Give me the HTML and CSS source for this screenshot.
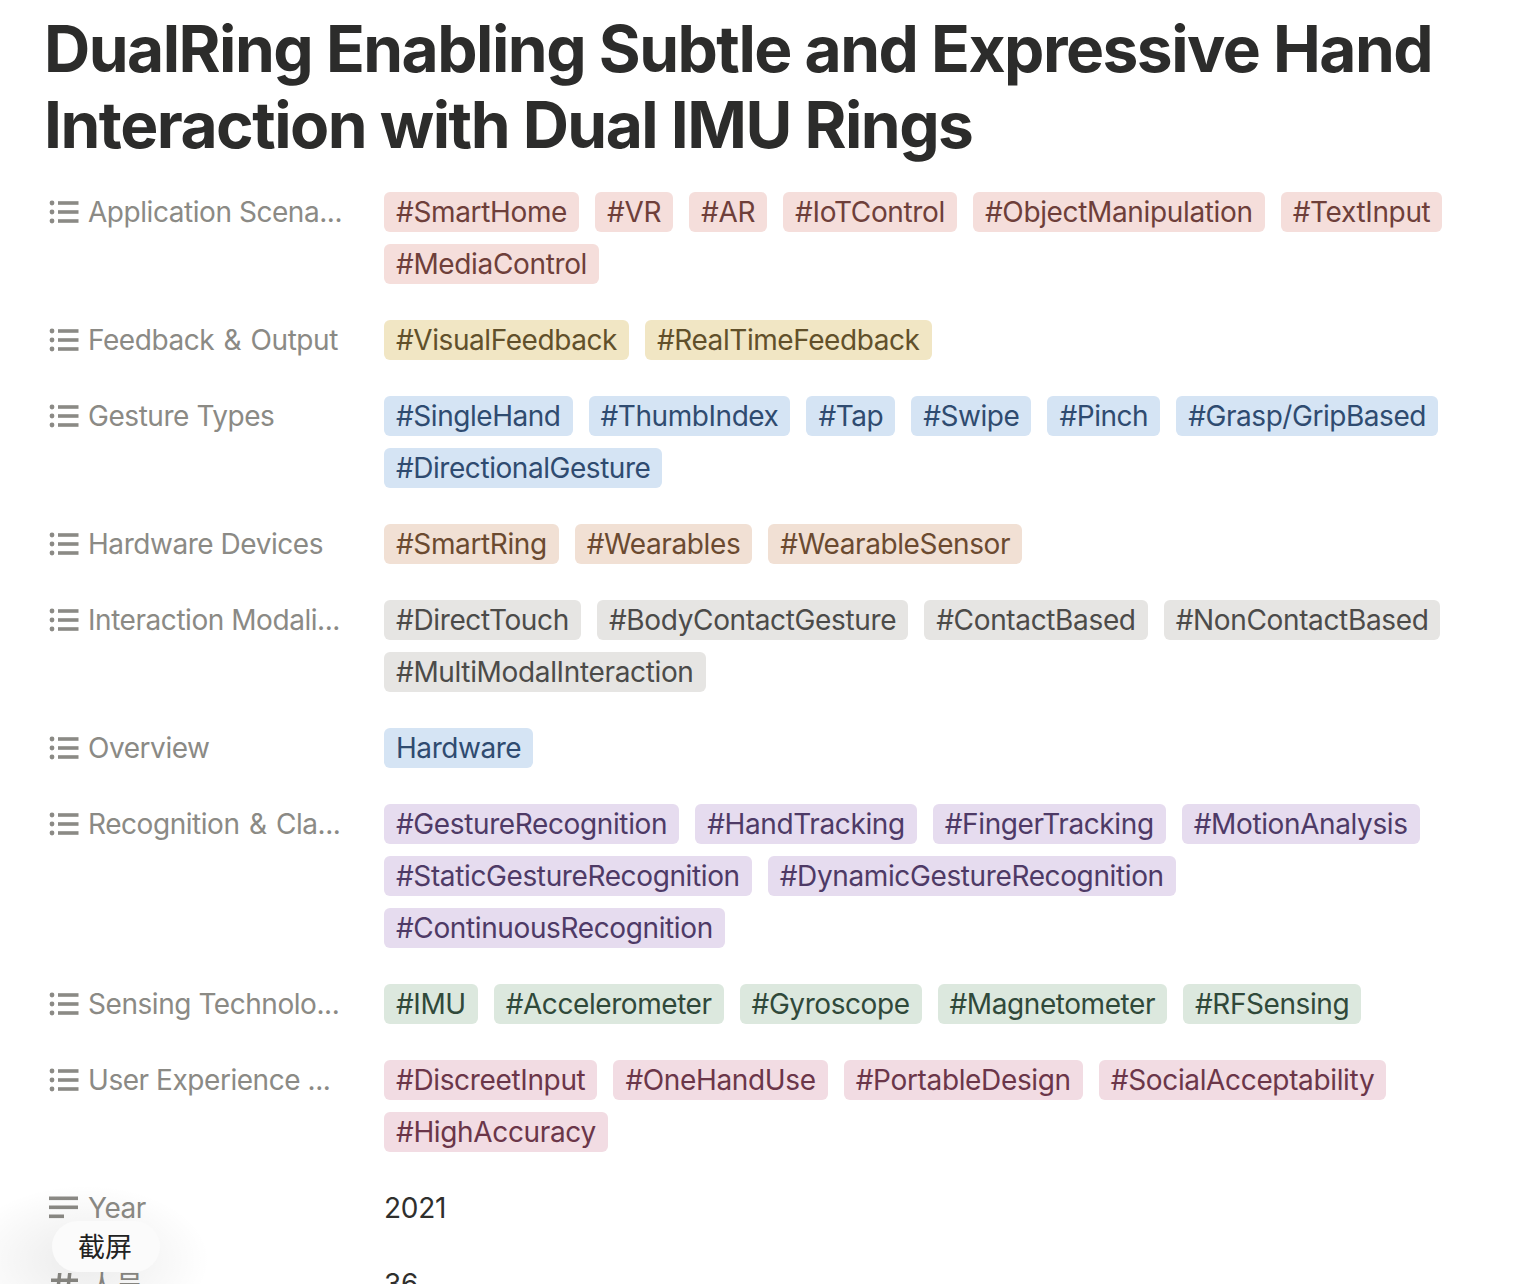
FILE: index.html
```html
<!DOCTYPE html>
<html lang="en">
<head>
<meta charset="utf-8">
<title>DualRing</title>
<link rel="stylesheet" href="styles.css">
</head>
<body>
<svg class="defs" width="0" height="0">
  <symbol id="list" viewBox="0 0 30 24"><circle cx="3" cy="3" r="2.4"/><circle cx="3" cy="12" r="2.4"/><circle cx="3" cy="21" r="2.4"/><rect x="9" y="1.2" width="20.5" height="3.6"/><rect x="9" y="10.2" width="20.5" height="3.6"/><rect x="9" y="19.2" width="20.5" height="3.6"/></symbol>
</svg>
<main class="page">
  <h1 class="title">DualRing Enabling Subtle and Expressive Hand Interaction with Dual IMU Rings</h1>
  <div class="props">
    <div class="row"><div class="label"><svg class="icon"><use href="#list"/></svg><span>Application Scena...</span></div>
      <div class="tags red"><span>#SmartHome</span><span>#VR</span><span>#AR</span><span>#IoTControl</span><span>#ObjectManipulation</span><span>#TextInput</span><span>#MediaControl</span></div></div>
    <div class="row"><div class="label"><svg class="icon"><use href="#list"/></svg><span>Feedback <i class="amp">&amp;</i> Output</span></div>
      <div class="tags yellow"><span>#VisualFeedback</span><span>#RealTimeFeedback</span></div></div>
    <div class="row"><div class="label"><svg class="icon"><use href="#list"/></svg><span>Gesture Types</span></div>
      <div class="tags blue"><span>#SingleHand</span><span>#ThumbIndex</span><span>#Tap</span><span>#Swipe</span><span>#Pinch</span><span>#Grasp/GripBased</span><span>#DirectionalGesture</span></div></div>
    <div class="row"><div class="label"><svg class="icon"><use href="#list"/></svg><span>Hardware Devices</span></div>
      <div class="tags orange"><span>#SmartRing</span><span>#Wearables</span><span>#WearableSensor</span></div></div>
    <div class="row"><div class="label"><svg class="icon"><use href="#list"/></svg><span>Interaction Modali...</span></div>
      <div class="tags gray"><span>#DirectTouch</span><span>#BodyContactGesture</span><span>#ContactBased</span><span>#NonContactBased</span><span>#MultiModalInteraction</span></div></div>
    <div class="row"><div class="label"><svg class="icon"><use href="#list"/></svg><span>Overview</span></div>
      <div class="tags blue"><span>Hardware</span></div></div>
    <div class="row"><div class="label"><svg class="icon"><use href="#list"/></svg><span>Recognition <i class="amp">&amp;</i> Cla...</span></div>
      <div class="tags purple"><span>#GestureRecognition</span><span>#HandTracking</span><span>#FingerTracking</span><span>#MotionAnalysis</span><span>#StaticGestureRecognition</span><span>#DynamicGestureRecognition</span><span>#ContinuousRecognition</span></div></div>
    <div class="row"><div class="label"><svg class="icon"><use href="#list"/></svg><span>Sensing Technolo...</span></div>
      <div class="tags green"><span>#IMU</span><span>#Accelerometer</span><span>#Gyroscope</span><span>#Magnetometer</span><span>#RFSensing</span></div></div>
    <div class="row"><div class="label"><svg class="icon"><use href="#list"/></svg><span>User Experience ...</span></div>
      <div class="tags pink"><span>#DiscreetInput</span><span>#OneHandUse</span><span>#PortableDesign</span><span>#SocialAcceptability</span><span>#HighAccuracy</span></div></div>
    <div class="row"><div class="label"><svg class="icon" viewBox="0 0 30 24"><rect y="0.5" width="29" height="3.6"/><rect y="9.5" width="29" height="3.6"/><rect y="18.5" width="15" height="3.6"/></svg><span>Year</span></div>
      <div class="value">2021</div></div>
    <div class="row"><div class="label"><svg class="icon" viewBox="0 0 30 24"><path d="M9 1h3.5L10 23H6.5zM19 1h3.5L20 23h-3.5zM2 6.500h27v3.500H2zM1 14.500h27v3.500H1z"/></svg><span>人员</span></div>
      <div class="value">36</div></div>
  </div>
</main>
<div class="shot-glow"></div>
<div class="shot">截屏</div>
</body>
</html>
```

FILE: styles.css
```css
html, body { margin: 0; height: 1284px; overflow: hidden; background: #fff; }
body { font-family: Inter, "Noto Sans CJK SC", sans-serif; color: #2f2f2d; position: relative; }
.defs { position: absolute; }
.page { height: 1284px; box-sizing: border-box; overflow: hidden; padding: 11px 44px 0 44px; }
.title { margin: 0 0 29px; font-size: 64px; line-height: 76px; font-weight: 700; letter-spacing: -1.5px; color: #2c2c2b; }
.props { display: flex; flex-direction: column; gap: 36px; }
.row { display: flex; align-items: flex-start; }
.label { flex: 0 0 340px; display: flex; align-items: center; gap: 9px; height: 40px; padding-left: 5px; box-sizing: border-box; font-size: 28px; letter-spacing: -0.45px; color: #8b8a85; white-space: nowrap; }
.amp { font-style: normal; padding: 0 2px; }
.icon { width: 30px; height: 24px; fill: #8b8a85; flex: none; }
.tags { display: flex; flex-wrap: wrap; gap: 12px 16px; flex: 1; }
.tags span { height: 40px; line-height: 40px; padding: 0 12px; border-radius: 6px; font-size: 28px; letter-spacing: -0.35px; white-space: nowrap; }
.red span { background: #f5dedb; color: #6e3f3a; }
.yellow span { background: #f1e6c4; color: #61502a; letter-spacing: -0.43px; }
.blue span { background: #d5e4f4; color: #2f4b70; letter-spacing: -0.45px; }
.orange span { background: #f1e0d4; color: #6b4a30; letter-spacing: -0.39px; }
.gray span { background: #e6e5e3; color: #4c4b49; }
.purple span { background: #e6dcef; color: #4e3a66; letter-spacing: -0.38px; }
.green span { background: #dce8de; color: #30493a; letter-spacing: -0.43px; }
.pink span { background: #f2dce3; color: #6b3649; }
.value { height: 40px; line-height: 40px; font-size: 28px; letter-spacing: -0.3px; }
.shot-glow { position: absolute; left: -40px; top: 1185px; width: 250px; height: 150px; border-radius: 50%; background: radial-gradient(closest-side, rgba(0,0,0,.08), rgba(0,0,0,0)); }
.shot { position: absolute; left: 52px; top: 1221px; box-sizing: border-box; width: 108px; height: 51px; padding-right: 2px; line-height: 49px; border-radius: 26px; background: #fbfbfb; text-align: center; font-size: 27px; color: #222; font-family: "Noto Sans CJK SC", sans-serif; }
```
